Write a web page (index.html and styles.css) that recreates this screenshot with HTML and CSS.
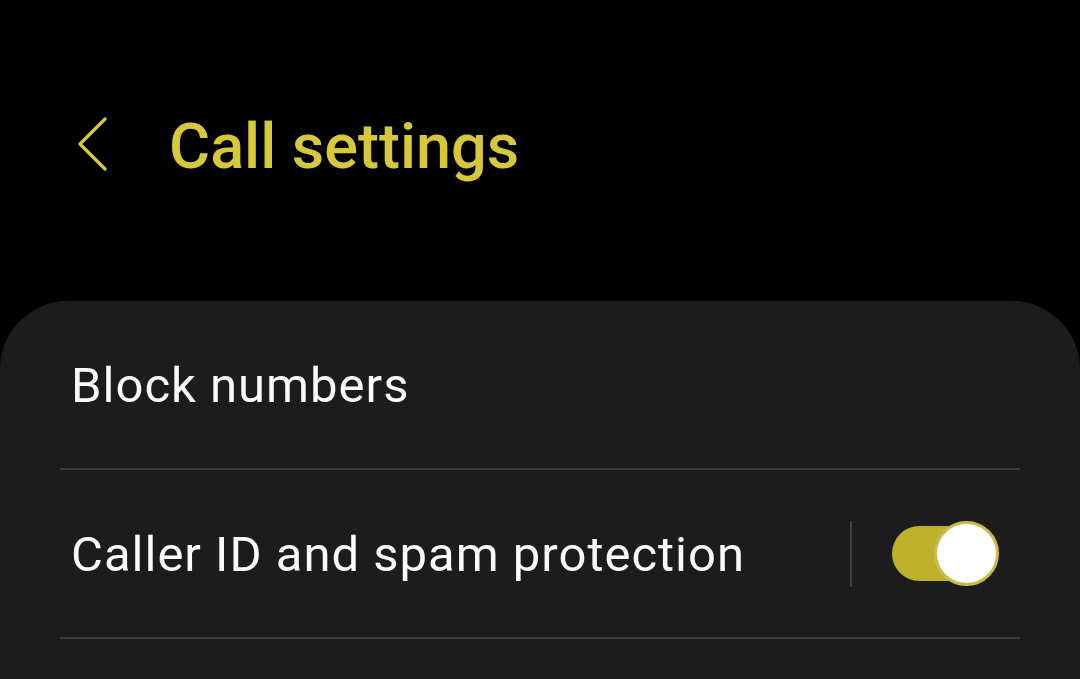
FILE: index.html
```html
<!DOCTYPE html>
<html>
<head>
<meta charset="utf-8">
<link rel="stylesheet" href="styles.css">
</head>
<body>
<div class="screen">
  <header class="header">
    <svg class="back" width="32" height="58" viewBox="0 0 32 58">
      <polyline points="28,2 3,27 28,52" fill="none" stroke="#d7c83a" stroke-width="3.2" stroke-linecap="round" stroke-linejoin="round"/>
    </svg>
    <h1 class="title">Call settings</h1>
  </header>
  <main class="card">
    <div class="row">
      <span class="label">Block numbers</span>
    </div>
    <div class="row">
      <span class="label">Caller ID and spam protection</span>
      <div class="control">
        <span class="vsep"></span>
        <span class="switch"><span class="knob"></span></span>
      </div>
    </div>
  </main>
</div>
</body>
</html>
```
FILE: styles.css
```css
html, body {
  margin: 0;
  padding: 0;
  background: #000;
}
.screen {
  width: 1080px;
  height: 679px;
  overflow: hidden;
  background: #000;
  font-family: Roboto, "Noto Sans", sans-serif;
}
.header {
  height: 301px;
  box-sizing: border-box;
  display: flex;
  align-items: flex-start;
  padding: 117px 0 0 77px;
}
.back {
  display: block;
  margin-top: 0;
}
.title {
  margin: -10px 0 0 60px;
  font-size: 63px;
  font-weight: 500;
  color: #d7c83a;
  line-height: 80px;
  letter-spacing: 0;
}
.card {
  background: #1c1c1c;
  border-radius: 68px 68px 0 0;
  padding: 0 60px;
  height: 378px;
}
.row {
  height: 167px;
  border-bottom: 2px solid #3b3b3b;
  display: flex;
  align-items: center;
  padding: 0 22px 0 11px;
}
.label {
  flex: 1;
  color: #fafafa;
  font-size: 49px;
  letter-spacing: 1px;
  line-height: 60px;
  margin-top: 3px;
}
.control {
  display: flex;
  align-items: center;
}
.vsep {
  width: 2px;
  height: 66px;
  background: #3f3f3f;
  margin-right: 40px;
}
.switch {
  position: relative;
  width: 100px;
  height: 55px;
  border-radius: 28px;
  background: #bdb02a;
  margin-right: 6px;
}
.knob {
  position: absolute;
  right: -7px;
  top: -5px;
  width: 59px;
  height: 59px;
  border-radius: 50%;
  background: #fff;
  border: 3px solid #c8bd4a;
}
```
